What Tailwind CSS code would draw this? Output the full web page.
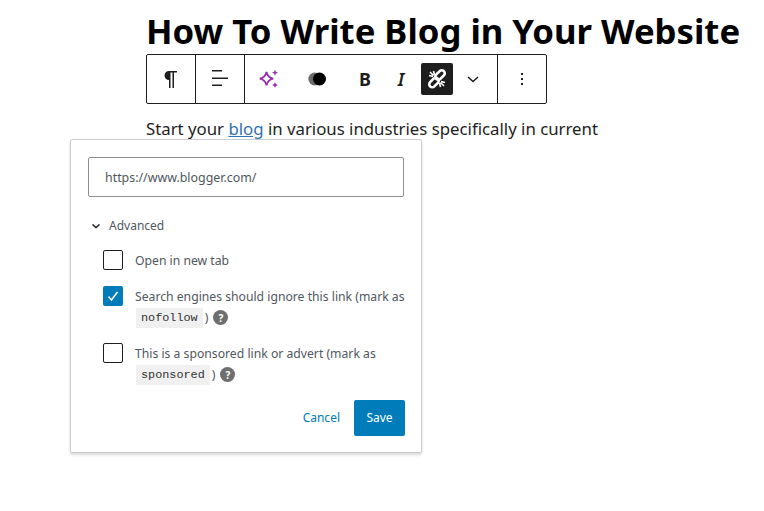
<!DOCTYPE html>
<html lang="en">
  <head>
    <meta charset="UTF-8" />
    <meta name="viewport" content="width=device-width, initial-scale=1.0" />
    <title>How To Write Blog in Your Website</title>
    <script src="https://cdn.jsdelivr.net/npm/@tailwindcss/browser@4"></script>
  </head>
  <body class="bg-white font-['Noto_Sans',sans-serif]">
    <div class="relative w-[764px] h-[511px] overflow-hidden">
      <div class="pl-[146px]">
        <h1 class="h-[54px] pt-[7px] text-[34.7px] leading-[48px] font-bold text-black whitespace-nowrap">How To Write Blog in Your Website</h1>

        <!-- block toolbar -->
        <div class="flex h-[50px] w-[401px] rounded-[2px] border border-[#1e1e1e] text-[#1e1e1e]">
          <div class="flex w-[49px] items-center justify-center border-r border-[#1e1e1e]">
            <svg width="24" height="24" viewBox="0 0 24 24" fill="currentColor"><path d="M18 4H10c-2.500 0-4.500 2-4.500 4.500S7.500 13 10 13v8h1.500V5.500h2V21H15V5.500h3z" /></svg>
          </div>
          <div class="flex w-[49px] items-center justify-center border-r border-[#1e1e1e]">
            <svg width="24" height="24" viewBox="0 0 24 24" fill="currentColor"><path d="M4 3h10v1.500H4zM4 10.500h16V12H4zM4 17.500h10V19H4z" /></svg>
          </div>
          <div class="flex flex-1 items-center border-r border-[#1e1e1e]">
            <svg class="ml-[12px]" width="24" height="24" viewBox="0 0 24 24" fill="none" stroke="#9b2fae" stroke-width="1.8"><path d="M9.500 5c.8 3.700 2.800 5.900 6.700 6.700-3.900.8-5.900 3-6.700 6.700-.8-3.700-2.800-5.900-6.700-6.700 3.900-.8 5.900-3 6.700-6.700z" /><path fill="#9b2fae" stroke="none" d="M18 2.700l.9 2.100 2.100.9-2.100.9-.9 2.100-.9-2.100-2.100-.9 2.100-.9zM18 15l.9 2.100 2.100.9-2.100.9-.9 2.100-.9-2.100-2.100-.9 2.100-.9z" /></svg>
            <svg class="ml-[26px]" width="20" height="14" viewBox="0 0 20 14"><circle cx="7.800" cy="7" r="6.500" fill="#6b6b6b" /><circle cx="12.500" cy="7" r="6.500" fill="#000" /></svg>
            <span class="ml-[31px] w-[14px] text-center text-[18px] leading-6 font-bold">B</span>
            <span class="ml-[24px] w-[10px] text-center text-[18px] leading-6 font-semibold italic">I</span>
            <div class="ml-[15px] flex h-8 w-8 items-center justify-center rounded-[2px] bg-[#1e1e1e]">
              <svg width="24" height="24" viewBox="0 0 24 24" fill="none" stroke="#fff"><g stroke-width="2.6"><rect x="9.500" y="5" width="11" height="6" rx="3" transform="rotate(-45 15 8)" /><rect x="3.500" y="12.500" width="11" height="6" rx="3" transform="rotate(-45 9 15.500)" /></g><path stroke-width="1.6" d="M5 5l3.500 3.500M4 8.500l4 1M8.500 4l1 4M19 19l-3.500-3.500M20 15.500l-4-1M15.500 20l-1-4" /></svg>
            </div>
            <svg class="ml-[8px]" width="24" height="24" viewBox="0 0 24 24" fill="none" stroke="currentColor" stroke-width="1.5"><path d="M7 10l5 4.500 5-4.500" /></svg>
          </div>
          <div class="flex w-[48px] items-center justify-center">
            <svg width="24" height="24" viewBox="0 0 24 24" fill="currentColor"><path d="M11 6h2v2h-2zM11 11h2v2h-2zM11 16h2v2h-2z" /></svg>
          </div>
        </div>

        <p class="mt-[12px] text-[16.8px] leading-[26px] text-[#1e1e1e] whitespace-nowrap">Start your <a href="#" class="text-[#2f72b5] underline">blog</a> in various industries specifically in current</p>
      </div>

      <!-- link popover -->
      <div class="absolute left-[70px] top-[139px] h-[314px] w-[352px] rounded-[2px] border border-[#ccc] bg-white px-[17px] pt-[17px] shadow-[0_2px_3px_rgba(0,0,0,0.15)]">
        <div class="flex h-10 w-[316px] items-center rounded-[2px] border border-[#8c8f94] pt-[2px] pl-4 text-[12.4px] text-[#50575e]">https://www.blogger.com/</div>

        <div class="mt-[19px] flex h-[20px] items-center text-[12px] text-[#50575e]">
          <svg width="12" height="12" viewBox="0 0 12 12" fill="none" stroke="#1e1e1e" stroke-width="1.5" class="ml-[2px]"><path d="M2.500 4.500L6 7.500l3.500-3" /></svg>
          <span class="ml-[7px]">Advanced</span>
        </div>

        <div class="mt-[14px] flex flex-col pl-[15px] text-[12.2px] leading-[21px] text-[#50575e]">
          <div class="flex items-start">
            <span class="h-5 w-5 shrink-0 rounded-[2px] border border-[#1e1e1e]"></span>
            <span class="ml-3">Open in new tab</span>
          </div>
          <div class="mt-[15px] flex items-start">
            <span class="flex h-5 w-5 shrink-0 items-center justify-center rounded-[2px] bg-[#007cba]">
              <svg width="14" height="14" viewBox="0 0 14 14" fill="none" stroke="#fff" stroke-width="1.5"><path d="M2.500 7.500l3 3.500 6-8" /></svg>
            </span>
            <div class="ml-3 whitespace-nowrap">
              <div>Search engines should ignore this link (mark as</div>
              <div class="flex items-center">
                <code class="ml-[1px] bg-[#f0f0f0] px-[5px] font-['Liberation_Mono',monospace] text-[11.8px] leading-5 text-[#333]">nofollow</code>
                <span class="ml-[2px]">)</span>
                <span class="ml-[5px] flex h-[15px] w-[15px] items-center justify-center rounded-full bg-[#6f6f6f] text-[10px] leading-none font-bold text-white">?</span>
              </div>
            </div>
          </div>
          <div class="mt-[15px] flex items-start">
            <span class="h-5 w-5 shrink-0 rounded-[2px] border border-[#1e1e1e]"></span>
            <div class="ml-3 whitespace-nowrap">
              <div>This is a sponsored link or advert (mark as</div>
              <div class="flex items-center">
                <code class="ml-[1px] bg-[#f0f0f0] px-[5px] font-['Liberation_Mono',monospace] text-[11.8px] leading-5 text-[#333]">sponsored</code>
                <span class="ml-[2px]">)</span>
                <span class="ml-[5px] flex h-[15px] w-[15px] items-center justify-center rounded-full bg-[#6f6f6f] text-[10px] leading-none font-bold text-white">?</span>
              </div>
            </div>
          </div>
        </div>

        <div class="mt-[15px] flex items-center justify-end">
          <a href="#" class="text-[12px] text-[#007cba]">Cancel</a>
          <button class="ml-[14px] mr-[-1px] h-9 w-[51px] rounded-[2px] bg-[#007cba] text-[12px] text-white">Save</button>
        </div>
      </div>
    </div>
  </body>
</html>
